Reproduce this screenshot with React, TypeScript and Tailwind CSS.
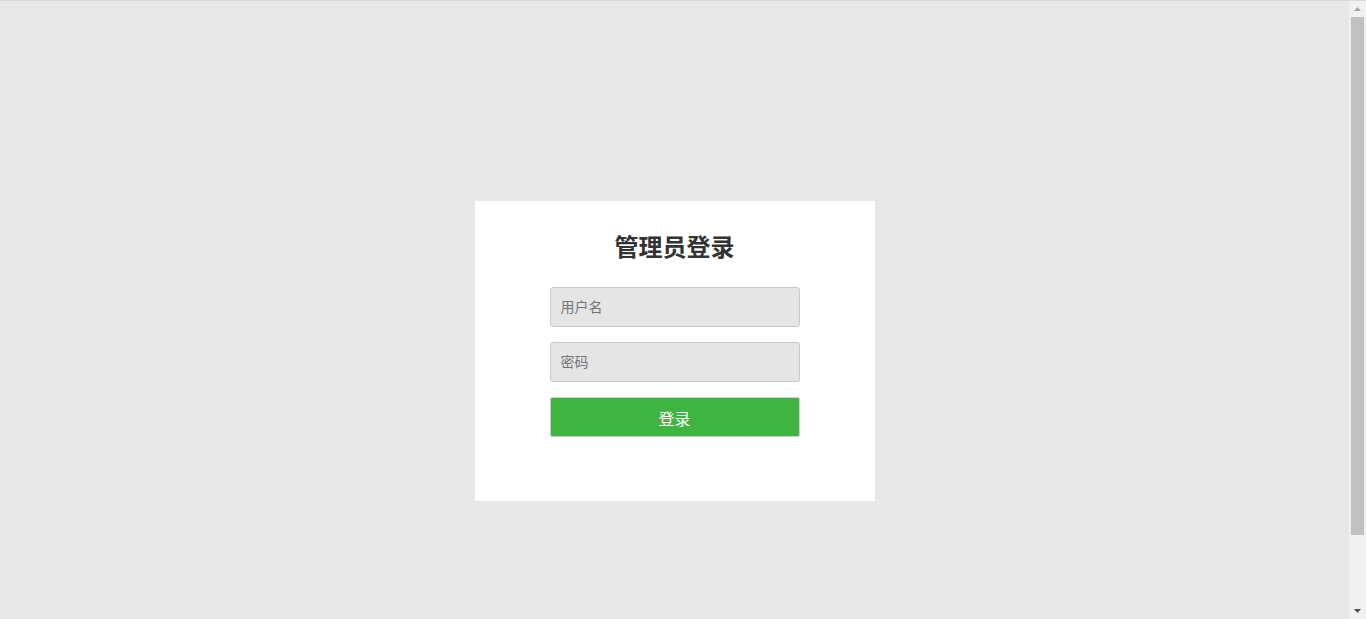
export default function App() {
  return (
    <div
      className="flex h-[619px] overflow-hidden border-t border-[#d9d9d9] bg-[#e8e8e8]"
      style={{ fontFamily: '"Liberation Sans", "Noto Sans CJK SC", sans-serif' }}
    >
      <div className="flex-1 pt-[200px]">
        <div className="mx-auto flex h-[300px] w-[400px] flex-col items-center bg-white pt-[30px]">
          <h1 className="text-[24px] font-bold leading-[34px] text-[#333]">管理员登录</h1>
          <form className="mt-[22px] flex w-[250px] flex-col gap-[15px]" onSubmit={(e) => e.preventDefault()}>
            <input
              type="text"
              placeholder="用户名"
              className="h-[40px] w-full rounded-[3px] border border-[#c9c9c9] bg-[#e5e5e5] px-[10px] text-[14px] text-[#333] outline-none placeholder:text-[#757575]"
            />
            <input
              type="password"
              placeholder="密码"
              className="h-[40px] w-full rounded-[3px] border border-[#c9c9c9] bg-[#e5e5e5] px-[10px] text-[14px] text-[#333] outline-none placeholder:text-[#757575]"
            />
            <button
              type="submit"
              className="h-[40px] w-full rounded-[2px] border border-[#d0d0d0] bg-[#3db540] pt-[5px] text-[16px] text-white"
            >
              登录
            </button>
          </form>
        </div>
      </div>

      {/* fake browser scrollbar */}
      <div className="-mt-px flex w-[17px] flex-col bg-[#f1f1f1]">
        <div className="flex h-[17px] items-center justify-center">
          <svg width="7" height="4" viewBox="0 0 7 4"><path d="M3.5 0L7 4H0z" fill="#a3a3a3" /></svg>
        </div>
        <div className="mx-[2px] h-[518px] bg-[#c1c1c1]" />
        <div className="flex-1" />
        <div className="flex h-[17px] items-center justify-center">
          <svg width="7" height="4" viewBox="0 0 7 4"><path d="M0 0h7L3.5 4z" fill="#505050" /></svg>
        </div>
      </div>
    </div>
  );
}
